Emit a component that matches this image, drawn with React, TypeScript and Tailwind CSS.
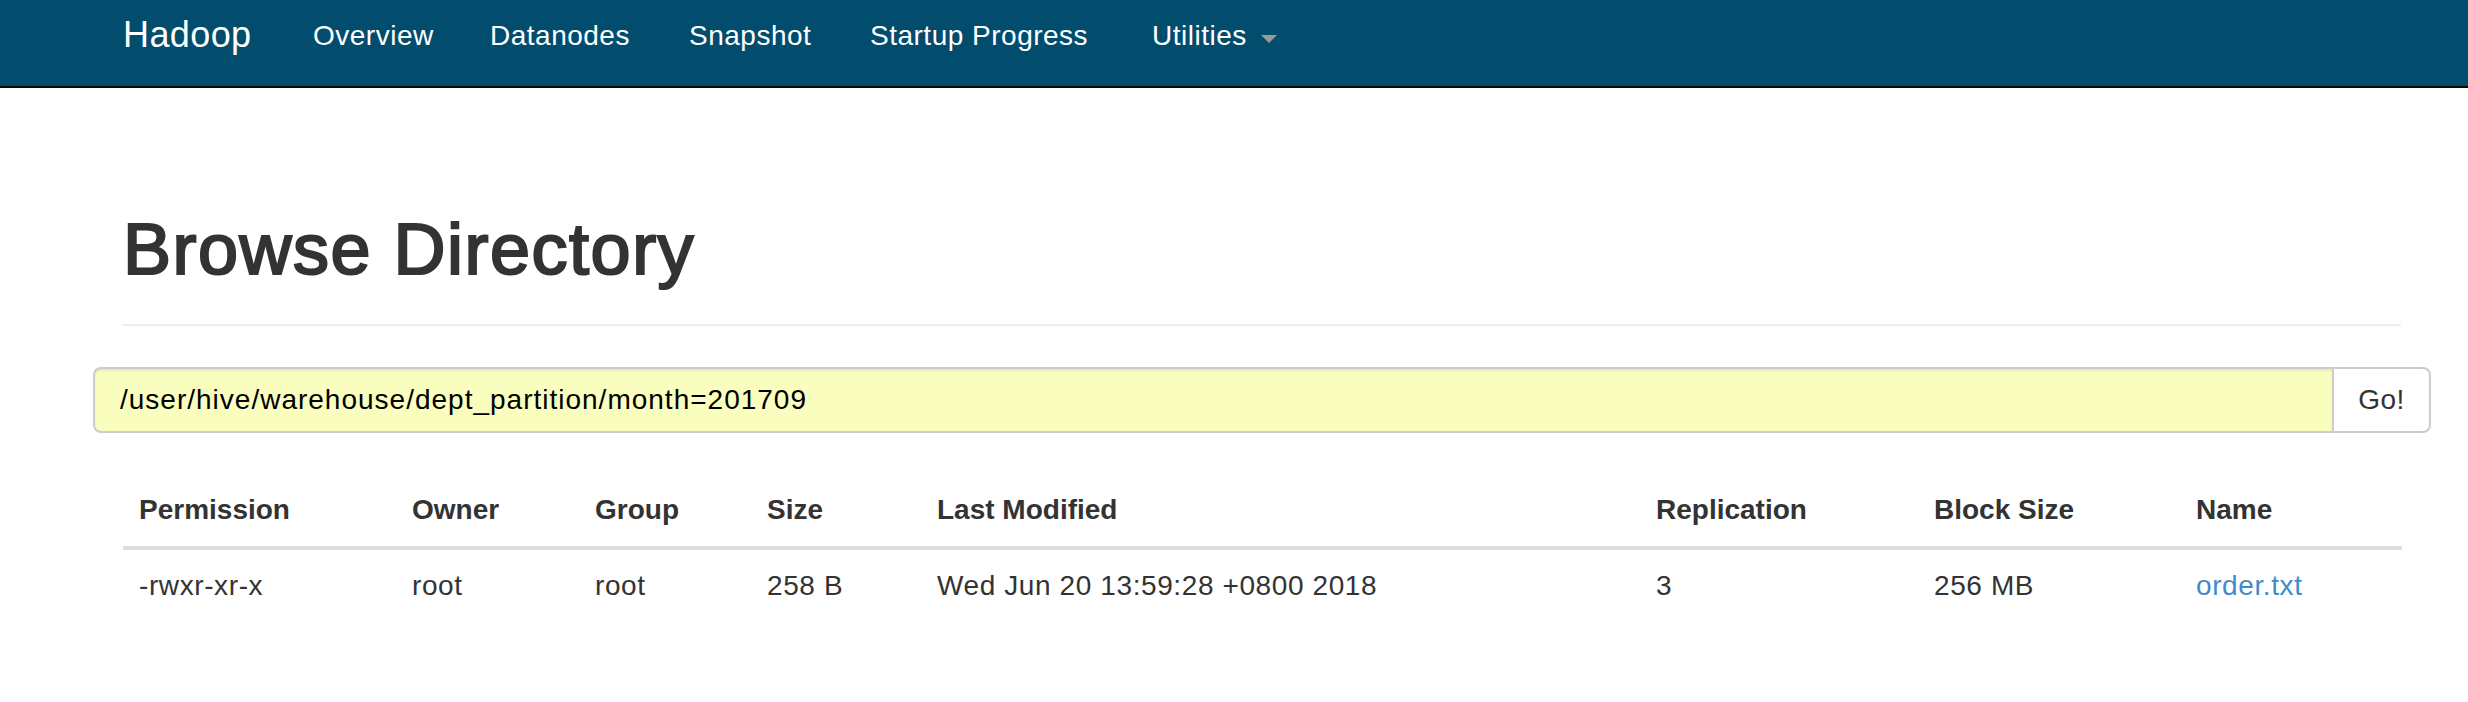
import React from "react";

const cols = [
  { name: "Permission", w: 273 },
  { name: "Owner", w: 183 },
  { name: "Group", w: 172 },
  { name: "Size", w: 170 },
  { name: "Last Modified", w: 719 },
  { name: "Replication", w: 278 },
  { name: "Block Size", w: 262 },
  { name: "Name", w: 222 },
];

const cells = [
  "-rwxr-xr-x",
  "root",
  "root",
  "258 B",
  "Wed Jun 20 13:59:28 +0800 2018",
  "3",
  "256 MB",
];

export default function App() {
  return (
    <div className="min-h-[702px] bg-white font-['Liberation_Sans','Helvetica_Neue',Arial,sans-serif] text-[#333]">
      <nav className="box-border flex h-[88px] border-b-2 border-[#080808] bg-[#024c6e] pl-[93px]">
        <a className="box-border w-[190px] pl-[30px] pt-[15px] text-[36px] leading-[40px] tracking-[0.4px] text-white">Hadoop</a>
        <a className="box-border w-[177px] pl-[30px] pt-[16px] text-[28px] leading-[40px] tracking-[0.5px] text-white">Overview</a>
        <a className="box-border w-[199px] pl-[30px] pt-[16px] text-[28px] leading-[40px] tracking-[0.5px] text-white">Datanodes</a>
        <a className="box-border w-[181px] pl-[30px] pt-[16px] text-[28px] leading-[40px] tracking-[0.5px] text-white">Snapshot</a>
        <a className="box-border w-[282px] pl-[30px] pt-[16px] text-[28px] leading-[40px] tracking-[0.5px] text-white">Startup Progress</a>
        <a className="box-border flex items-start pl-[30px] pt-[16px] text-[28px] leading-[40px] tracking-[0.5px] text-white">
          Utilities
          <span className="ml-[14px] mt-[19px] h-0 w-0 border-x-[8px] border-t-[8px] border-x-transparent border-t-[#999]" />
        </a>
      </nav>

      <div className="pl-[93px] pr-[37px]">
        <div className="px-[30px]">
          <div className="mt-[121px] border-b-2 border-[#eee] pb-[35px]">
            <h1 className="text-[72px] leading-[80px] font-normal tracking-[1.5px] [-webkit-text-stroke-width:2.2px] [-webkit-text-stroke-color:#333]">
              Browse Directory
            </h1>
          </div>
        </div>

        <div className="mt-[41px] flex h-[66px]">
          <div className="box-border flex flex-1 items-center rounded-l-[8px] border-2 border-r-0 border-[#ccc] bg-[#f9fdbe] pl-[25px] text-[28px] leading-[40px] tracking-[1px] text-black shadow-[inset_0_2px_2px_rgba(0,0,0,0.075)]">
            /user/hive/warehouse/dept_partition/month=201709
          </div>
          <button className="box-border w-[99px] rounded-r-[8px] border-2 border-[#ccc] bg-white text-center text-[28px] leading-[40px] tracking-[0.5px] text-[#333]">
            Go!
          </button>
        </div>

        <div className="mt-[41px] px-[30px]">
          <table className="w-full table-fixed border-collapse">
            <colgroup>
              {cols.map((c) => (
                <col key={c.name} style={{ width: c.w }} />
              ))}
            </colgroup>
            <thead>
              <tr>
                {cols.map((c) => (
                  <th
                    key={c.name}
                    className="border-b-4 border-[#ddd] p-[16px] text-left text-[28px] font-bold leading-[40px]"
                  >
                    {c.name}
                  </th>
                ))}
              </tr>
            </thead>
            <tbody>
              <tr className="text-[28px] leading-[40px] tracking-[0.6px]">
                {cells.map((t, i) => (
                  <td key={i} className="p-[16px]">
                    {t}
                  </td>
                ))}
                <td className="p-[16px]">
                  <a className="text-[#428bca]">order.txt</a>
                </td>
              </tr>
            </tbody>
          </table>
        </div>
      </div>
    </div>
  );
}
